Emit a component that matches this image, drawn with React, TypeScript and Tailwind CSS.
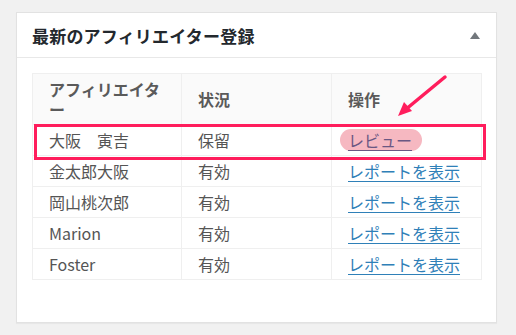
import React from "react";

const rows = [
  { name: "金太郎大阪", status: "有効" },
  { name: "岡山桃次郎", status: "有効" },
  { name: "Marion", status: "有効" },
  { name: "Foster", status: "有効" },
];

export default function App() {
  return (
    <div
      className="w-[516px] h-[335px] bg-[#f1f1f1] pt-[12px] pl-[16px] overflow-hidden"
      style={{ fontFamily: '"Noto Sans CJK JP", "Noto Sans", sans-serif' }}
    >
      <div className="relative w-[481px] h-[311px] bg-white border border-[#e2e2e2] shadow-[0_1px_1px_rgba(0,0,0,0.04)]">
        <div className="h-[45px] border-b border-[#e8e8e8] flex items-center justify-between pl-[15px] pr-[16px]">
          <h2 className="text-[17px] font-bold text-[#23282d] leading-none tracking-[0.2px]">
            最新のアフィリエイター登録
          </h2>
          <svg width="10" height="7" viewBox="0 0 10 7" className="mt-[1px]">
            <polygon points="5,0 10,7 0,7" fill="#72777c" />
          </svg>
        </div>
        <div className="relative pt-[15px] pl-[15px]">
          <table className="table-fixed w-[450px] border-collapse text-[16px] leading-[20px]">
            <thead>
              <tr className="bg-[#fafafa]">
                <th className="w-[149px] border border-[#efefef] px-[16px] py-[5px] text-left font-semibold text-[#5a5a5a]">
                  <div className="leading-[20px]">アフィリエイタ</div>
                  <div className="leading-[20px]">ー</div>
                </th>
                <th className="w-[150px] border border-[#efefef] px-[16px] py-[5px] text-left font-semibold text-[#5a5a5a]">
                  状況
                </th>
                <th className="border border-[#efefef] px-[16px] py-[5px] text-left font-semibold text-[#5a5a5a]">
                  操作
                </th>
              </tr>
            </thead>
            <tbody>
              <tr>
                <td className="border border-[#efefef] px-[16px] py-[5px] text-[#555]">大阪　寅吉</td>
                <td className="border border-[#efefef] px-[16px] py-[5px] text-[#555]">保留</td>
                <td className="border border-[#efefef] px-[16px] py-[5px]">
                  <span className="inline-block -ml-[8px] -my-[1px] pl-[8px] pr-[10px] py-[1px] rounded-full bg-[#f6b8c1] text-[#6a5783] underline underline-offset-[3px]">
                    レビュー
                  </span>
                </td>
              </tr>
              {rows.map((r) => (
                <tr key={r.name}>
                  <td className="border border-[#efefef] px-[16px] py-[5px] text-[#555]">{r.name}</td>
                  <td className="border border-[#efefef] px-[16px] py-[5px] text-[#555]">{r.status}</td>
                  <td className="border border-[#efefef] px-[16px] py-[5px]">
                    <a className="text-[#2f80b8] underline underline-offset-[3px]">レポートを表示</a>
                  </td>
                </tr>
              ))}
            </tbody>
          </table>
          <div className="absolute left-[17px] top-[66px] w-[452px] h-[36px] border-[3.5px] border-[#ff1d5c] pointer-events-none" />
        </div>
        <svg
          className="absolute left-0 top-0 pointer-events-none"
          width="481"
          height="311"
          viewBox="0 0 481 311"
        >
          <line x1="428" y1="64" x2="388" y2="97" stroke="#ff1d5c" strokeWidth="3.5" strokeLinecap="round" />
          <polygon points="381,103 387,89 395,98" fill="#ff1d5c" />
        </svg>
      </div>
    </div>
  );
}
